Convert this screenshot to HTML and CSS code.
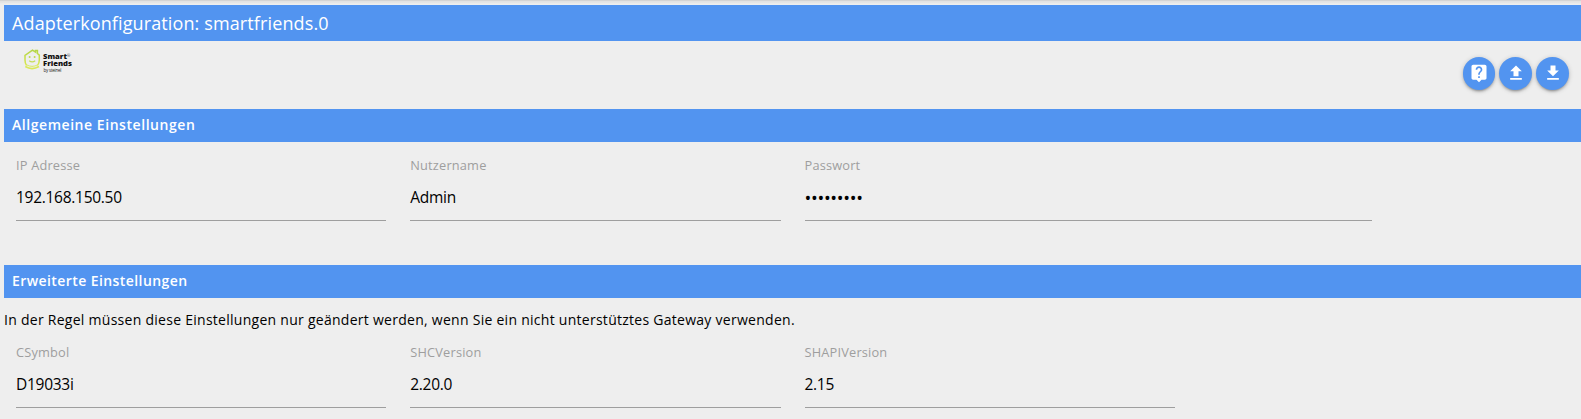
FILE: index.html
```html
<!DOCTYPE html>
<html lang="de">
<head>
<meta charset="utf-8">
<title>Adapterkonfiguration: smartfriends.0</title>
<link rel="stylesheet" href="styles.css">
</head>
<body>
<main class="page">
  <h1 class="title">Adapterkonfiguration: smartfriends.0</h1>
  <header class="toolbar">
    <svg class="logo" width="52" height="30" viewBox="0 0 52 30" role="img" aria-label="Smart Friends">
      <defs><linearGradient id="house" x1="0" y1="0" x2="0" y2="1"><stop offset="0" stop-color="#b4d548"/><stop offset="1" stop-color="#d9e84e"/></linearGradient></defs>
      <path d="M2.6 16.5 Q.9 14 1 11 V6.3 L8.5 1.1 L11.5 3.1 V1.4 H13.4 V4.5 L15.3 6.2 V11 Q15.3 14.5 13.4 16.5" fill="none" stroke="url(#house)" stroke-width="1.5"/>
      <path d="M3 16 Q8 18.6 13.4 16" fill="none" stroke="#dcea70" stroke-width="1.2"/>
      <path d="M1.3 17.6 Q8 21.6 15 17.6" fill="none" stroke="#d9e858" stroke-width="1.7"/>
      <path d="M5.2 11.8 Q8.2 14 11.2 11.8" fill="none" stroke="#c5dd55" stroke-width="1.3"/>
      <circle cx="5.6" cy="8" r="1" fill="#bdd94c"/><circle cx="10.6" cy="8" r="1" fill="#bdd94c"/>
      <text class="logo-name" x="19" y="10.4" textLength="24" lengthAdjust="spacingAndGlyphs">Smart</text>
      <text class="logo-mark" x="43" y="7.5">®</text>
      <text class="logo-name" x="19" y="17.4" textLength="29" lengthAdjust="spacingAndGlyphs">Friends</text>
      <text class="logo-sub" x="19.5" y="23" textLength="18">by steinel</text>
    </svg>
    <nav class="actions">
      <button class="round" aria-label="Hilfe"><svg viewBox="0 0 24 24"><path d="M19 2H5c-1.110 0-2 .9-2 2v14c0 1.100.89 2 2 2h4l3 3 3-3h4c1.100 0 2-.9 2-2V4c0-1.100-.9-2-2-2zm-6 16h-2v-2h2v2zm2.070-7.750-.9.920C13.450 11.900 13 12.500 13 14h-2v-.5c0-1.100.45-2.100 1.170-2.830l1.240-1.260c.37-.36.59-.86.59-1.410 0-1.100-.9-2-2-2s-2 .9-2 2H8c0-2.210 1.790-4 4-4s4 1.790 4 4c0 .88-.36 1.680-.93 2.250z"/></svg></button>
      <button class="round" aria-label="Hochladen"><svg viewBox="0 0 24 24"><path d="M9 16h6v-6h4l-7-7-7 7h4zm-4 2h14v2H5z"/></svg></button>
      <button class="round" aria-label="Herunterladen"><svg viewBox="0 0 24 24"><path d="M19 9h-4V3H9v6H5l7 7 7-7zM5 18v2h14v-2H5z"/></svg></button>
    </nav>
  </header>

  <h2 class="section">Allgemeine Einstellungen</h2>
  <div class="row general">
    <label class="field"><span class="label">IP Adresse</span><span class="value">192.168.150.50</span></label>
    <label class="field"><span class="label">Nutzername</span><span class="value">Admin</span></label>
    <label class="field wide"><span class="label">Passwort</span><span class="value password">•••••••••</span></label>
  </div>

  <h2 class="section advanced">Erweiterte Einstellungen</h2>
  <p class="hint">In der Regel müssen diese Einstellungen nur geändert werden, wenn Sie ein nicht unterstütztes Gateway verwenden.</p>
  <div class="row">
    <label class="field"><span class="label">CSymbol</span><span class="value">D19033i</span></label>
    <label class="field"><span class="label">SHCVersion</span><span class="value">2.20.0</span></label>
    <label class="field"><span class="label">SHAPIVersion</span><span class="value">2.15</span></label>
  </div>
</main>
</body>
</html>
```
FILE: styles.css
```css
* { box-sizing: border-box; }
body {
  margin: 0;
  height: 419px;
  overflow: hidden;
  background: #eee;
  color: #000;
  font-family: "Open Sans", "Noto Sans", sans-serif;
}
.page {
  height: 419px;
  padding: 5px 0 0 4px;
  background: linear-gradient(#d4d4d4 0 1px, #e3e3e3 1px 2px, #eee 4px);
}
.title, .section {
  margin: 0;
  padding-left: 8px;
  background: #5294f0;
  color: #fff;
}
.title {
  height: 36px;
  line-height: 37px;
  font-size: 18px;
  font-weight: 400;
  letter-spacing: 0.12px;
}
.toolbar {
  display: flex;
  justify-content: space-between;
  height: 68px;
  padding: 8px 12px 0 20px;
}
.logo { display: block; }
.logo-name { font: 800 7.5px "Open Sans", sans-serif; fill: #111; }
.logo-mark { font: 4px "Open Sans", sans-serif; fill: #333; }
.logo-sub { font: 4.5px "Open Sans", sans-serif; fill: #222; }
.actions {
  display: flex;
  gap: 4px;
  padding-top: 8px;
}
.round {
  display: grid;
  place-items: center;
  width: 32.8px;
  height: 32.8px;
  padding: 0;
  border: 0;
  border-radius: 50%;
  background: #5294f0;
  box-shadow: 0 2px 2px rgba(0,0,0,.14), 0 3px 1px -2px rgba(0,0,0,.12), 0 1px 5px rgba(0,0,0,.2);
}
.round svg { width: 20px; height: 20px; margin-top: -1px; fill: #fff; }
.section {
  height: 33px;
  line-height: 32px;
  font-size: 14px;
  font-weight: 600;
  letter-spacing: 0.55px;
}
.advanced { letter-spacing: 0.42px; }
.row { display: flex; }
.general { height: 123px; padding-top: 14px; }
.field { width: 25%; padding: 0 12px; }
.wide { width: 37.5%; }
.label {
  display: block;
  height: 20px;
  line-height: 18px;
  color: #9e9e9e;
  font-size: 12.8px;
  letter-spacing: 0.18px;
}
.value {
  display: block;
  height: 45px;
  line-height: 43px;
  border-bottom: 1px solid #9e9e9e;
  font-size: 15.5px;
  letter-spacing: -0.28px;
}
.password { line-height: 44px; font-size: 18px; letter-spacing: -0.3px; }
.hint {
  height: 45px;
  margin: 0;
  line-height: 44px;
  font-size: 14px;
  letter-spacing: 0.27px;
  white-space: nowrap;
}
```
